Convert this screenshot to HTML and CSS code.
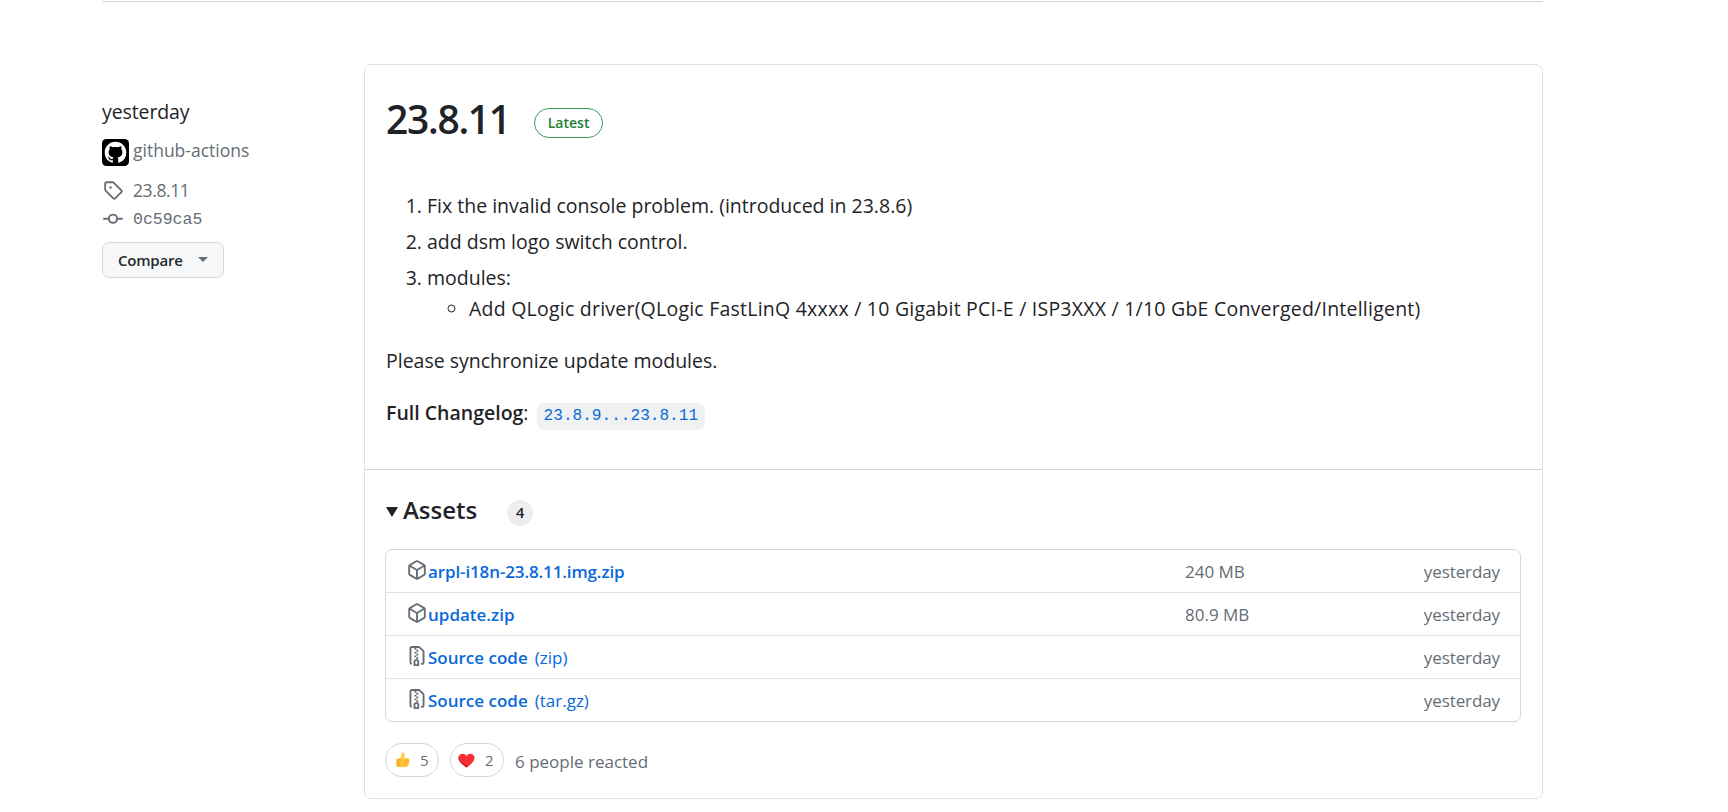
FILE: index.html
```html
<!DOCTYPE html>
<html lang="en">
<head>
  <meta charset="UTF-8" />
  <meta name="viewport" content="width=device-width, initial-scale=1.0" />
  <title>Release 23.8.11</title>
  <link rel="stylesheet" href="styles.css">
</head>
<body>

  <!-- Shared icons -->
  <svg class="sprite" xmlns="http://www.w3.org/2000/svg">
    <symbol id="icon-package" viewBox="0 0 16 16">
      <path d="m8.878.392 5.25 3.045c.54.314.872.89.872 1.514v6.098a1.75 1.75 0 0 1-.872 1.514l-5.25 3.045a1.75 1.75 0 0 1-1.756 0l-5.25-3.045A1.75 1.75 0 0 1 1 11.049V4.951c0-.624.332-1.201.872-1.514L7.122.392a1.75 1.75 0 0 1 1.756 0ZM7.875 1.69l-4.63 2.685L8 7.133l4.755-2.758-4.63-2.685a.248.248 0 0 0-.25 0ZM2.5 5.677v5.372c0 .09.047.171.125.216l4.625 2.683V8.432Zm6.25 8.271 4.625-2.683a.25.25 0 0 0 .125-.216V5.677L8.75 8.432Z"/>
    </symbol>
    <symbol id="icon-zip" viewBox="0 0 16 16">
      <path d="M3.5 1.75v11.5c0 .09.048.173.126.217a.75.75 0 0 1-.752 1.298A1.748 1.748 0 0 1 2 13.25V1.75C2 .784 2.784 0 3.75 0h5.586c.464 0 .909.185 1.237.513l2.914 2.914c.329.328.513.773.513 1.237v8.586A1.75 1.75 0 0 1 12.25 15h-.5a.75.75 0 0 1 0-1.5h.5a.25.25 0 0 0 .25-.25V4.664a.25.25 0 0 0-.073-.177L9.513 1.573a.25.25 0 0 0-.177-.073H3.75a.25.25 0 0 0-.25.25Z"/>
      <path fill-rule="evenodd" d="M7 10.500h1c1 0 1.750.8 1.750 1.750v3.250a.5.5 0 0 1-.5.5h-3.500a.5.5 0 0 1-.5-.5v-3.250c0-.95.75-1.750 1.750-1.750Zm-.25 1.750v2.250h1.500v-2.250a.25.25 0 0 0-.25-.25h-1a.25.25 0 0 0-.25.25Z"/>
      <path d="M6 1.500h1.500V3H6zM7.500 3H9v1.500H7.500zM6 4.500h1.500V6H6zM7.500 6H9v1.500H7.500zM6 7.500h1.500V9H6zM7.500 9H9v1.500H7.500z"/>
    </symbol>
  </svg>

  <hr class="divider">

  <main class="release">
    <aside class="meta">
      <div class="date">yesterday</div>
      <div class="author">
        <svg class="avatar" viewBox="0 0 27 27">
          <rect width="27" height="27" rx="4.5" fill="#000"/>
          <path fill="#fff" transform="translate(2.7 2.7) scale(1.35)" d="M8 0c4.42 0 8 3.58 8 8a8.013 8.013 0 0 1-5.45 7.59c-.4.08-.55-.17-.55-.38 0-.27.01-1.13.01-2.2 0-.75-.25-1.23-.54-1.48 1.78-.2 3.65-.88 3.65-3.95 0-.88-.31-1.59-.82-2.15.08-.2.36-1.02-.08-2.12 0 0-.67-.22-2.2.82-.64-.18-1.32-.27-2-.27-.68 0-1.36.09-2 .27-1.53-1.03-2.2-.82-2.2-.82-.44 1.1-.16 1.92-.08 2.12-.51.56-.82 1.28-.82 2.15 0 3.06 1.86 3.75 3.64 3.95-.23.2-.44.55-.51 1.07-.46.21-1.61.55-2.33-.66-.15-.24-.6-.83-1.23-.82-.67.01-.27.38.01.53.34.19.73.9.82 1.13.16.45.68 1.31 2.69.94 0 .67.01 1.3.01 1.49 0 .21-.15.45-.55.38A7.995 7.995 0 0 1 0 8c0-4.42 3.58-8 8-8Z"/>
        </svg>
        <span>github-actions</span>
      </div>
      <div class="ref tag">
        <svg class="icon" viewBox="0 0 16 16"><path d="M1 7.775V2.75C1 1.784 1.784 1 2.75 1h5.025c.464 0 .91.184 1.238.513l6.25 6.25a1.75 1.75 0 0 1 0 2.474l-5.026 5.026a1.75 1.75 0 0 1-2.474 0l-6.25-6.25A1.752 1.752 0 0 1 1 7.775Zm1.5 0c0 .066.026.13.073.177l6.25 6.25a.25.25 0 0 0 .354 0l5.025-5.025a.25.25 0 0 0 0-.354l-6.25-6.25a.25.25 0 0 0-.177-.073H2.75a.25.25 0 0 0-.25.25ZM6 5a1 1 0 1 1 0 2 1 1 0 0 1 0-2Z"/></svg>
        <span>23.8.11</span>
      </div>
      <div class="ref commit">
        <svg class="icon" viewBox="0 0 16 16"><path d="M11.93 8.5a4.002 4.002 0 0 1-7.86 0H.75a.75.75 0 0 1 0-1.5h3.32a4.002 4.002 0 0 1 7.86 0h3.32a.75.75 0 0 1 0 1.5Zm-1.43-.75a2.5 2.5 0 1 0-5 0 2.5 2.5 0 0 0 5 0Z"/></svg>
        <code>0c59ca5</code>
      </div>
      <button class="compare">Compare <span class="caret"></span></button>
    </aside>

    <section class="card">
      <div class="card-body">
        <header>
          <h1>23.8.11</h1>
          <span class="latest">Latest</span>
        </header>

        <ol>
          <li>Fix the invalid console problem. (introduced in 23.8.6)</li>
          <li>add dsm logo switch control.</li>
          <li>modules:
            <ul>
              <li>Add QLogic driver(QLogic FastLinQ 4xxxx / 10 Gigabit PCI-E / ISP3XXX / 1/10 GbE Converged/Intelligent)</li>
            </ul>
          </li>
        </ol>
        <p>Please synchronize update modules.</p>
        <p class="changelog"><strong>Full Changelog</strong>: <a href="#"><code>23.8.9...23.8.11</code></a></p>
      </div>

      <div class="card-assets">
        <h2><span class="triangle"></span>Assets <span class="counter">4</span></h2>

        <div class="assets">
          <div class="asset">
            <a href="#"><svg class="icon"><use href="#icon-package"/></svg><b class="tight">arpl-i18n-23.8.11.img.zip</b></a>
            <span class="size">240 MB</span>
            <span class="when">yesterday</span>
          </div>
          <div class="asset">
            <a href="#"><svg class="icon"><use href="#icon-package"/></svg><b>update.zip</b></a>
            <span class="size">80.9 MB</span>
            <span class="when">yesterday</span>
          </div>
          <div class="asset">
            <a href="#"><svg class="icon"><use href="#icon-zip"/></svg><b>Source code</b> <span class="ext">(zip)</span></a>
            <span class="when">yesterday</span>
          </div>
          <div class="asset">
            <a href="#"><svg class="icon"><use href="#icon-zip"/></svg><b>Source code</b> <span class="ext">(tar.gz)</span></a>
            <span class="when">yesterday</span>
          </div>
        </div>

        <div class="reactions">
          <button class="reaction">
            <svg width="14" height="16" viewBox="0 0 14 16">
              <path fill="#ffc83d" d="M6.500.5C7.900.3 8.600 1.200 8.500 2.700L8.300 6h3.500c1.300 0 1.800 1.100 1.300 1.900.6.700.5 1.700-.1 2.200.4.800.2 1.700-.5 2.100.2 1.200-.3 2.300-1.700 2.600-2.500.6-6 .6-8.300 0L2 7.500C4.500 6.500 5.500 4.500 5.500 2.500 5.500 1.300 5.700.7 6.500.5Z"/>
              <path fill="#fbb02e" d="M1.600 6.500H3.800c.6 0 .9.4.9.9v6.700c0 .5-.3.900-.9.900H2C.8 14.900.3 14 .3 12.800v-4C.3 7.500.7 6.500 1.600 6.500Z"/>
              <path fill="none" stroke="#f0a020" stroke-width=".7" d="M7.500 8.200h5.500M8 10.300h5M8 12.400h4.500"/>
            </svg>
            5
          </button>
          <button class="reaction heart">
            <svg width="17" height="15" viewBox="0 0 17 15">
              <path fill="#f92f35" d="M8.500 14.500C4.200 11.500.5 8.400.5 4.800.5 2.400 2.300.7 4.500.7c1.700 0 3.200.9 4 2.300.8-1.400 2.300-2.300 4-2.300 2.200 0 4 1.700 4 4.100 0 3.600-3.700 6.700-8 9.700Z"/>
              <path fill="#d9202c" d="M8.500 14.500C4.200 11.500.5 8.400.5 4.800c0-.8.200-1.500.5-2 .2 4 3.500 7.500 9.500 10.200Z"/>
            </svg>
            2
          </button>
          <span class="people">6 people reacted</span>
        </div>
      </div>
    </section>
  </main>

</body>
</html>
```
FILE: styles.css
```css
* {
  box-sizing: border-box;
}

body {
  margin: 0;
  padding: 1px 185px 0 102px;
  font-family: "Open Sans", "Noto Sans", sans-serif;
  font-size: 19.5px;
  line-height: 30px;
  color: #1f2328;
  background-color: #fff;
}

code {
  font-family: "Liberation Mono", monospace;
}

a {
  color: #0969da;
  text-decoration: none;
}

b,
strong {
  font-weight: 600;
}

button {
  font-family: inherit;
  background-color: #fff;
  cursor: pointer;
}

.sprite {
  display: none;
}

.divider {
  height: 1px;
  margin: 0 0 62px;
  border: 0;
  background-color: #d0d7de;
}

.icon {
  width: 20px;
  height: 20px;
  fill: #656d76;
  flex-shrink: 0;
}

.release {
  display: flex;
}

/* Left column */

.meta {
  width: 262px;
  flex-shrink: 0;
  padding-top: 33px;
  color: #656d76;
  font-size: 17.5px;
}

.date {
  font-size: 19.5px;
  letter-spacing: -0.1px;
  color: #1f2328;
}

.author {
  display: flex;
  gap: 4px;
  margin-top: 12px;
  line-height: 22px;
}

.avatar {
  width: 27px;
  height: 27px;
}

.ref {
  display: flex;
  gap: 10px;
  height: 20px;
  padding-left: 1px;
  line-height: 20px;
}

.tag {
  margin-top: 14px;
}

.tag span {
  letter-spacing: -0.4px;
}

.commit {
  margin-top: 9px;
}

.commit code {
  font-size: 16.5px;
  line-height: 22px;
}

.compare {
  display: flex;
  align-items: center;
  gap: 15px;
  height: 36px;
  margin-top: 13px;
  padding: 0 15px 1px;
  border: 1px solid #d5d8da;
  border-radius: 7px;
  background-color: #f6f8fa;
  color: #24292f;
  font-size: 15px;
  font-weight: 600;
  letter-spacing: -0.2px;
}

.caret {
  border: 5px solid transparent;
  border-top-color: #656d76;
  border-bottom: 0;
}

/* Release card */

.card {
  flex: 1;
  height: 735px;
  border: 1px solid #dde2e5;
  border-radius: 7px;
}

.card-body {
  height: 405px;
  padding: 28px 21px 0;
  border-bottom: 1px solid #ccd3d9;
}

.card header {
  display: flex;
  align-items: flex-start;
}

h1 {
  margin: 0;
  font-size: 39px;
  font-weight: 600;
  line-height: 51px;
  letter-spacing: -1.3px;
}

.latest {
  margin: 15px 0 0 24px;
  padding: 0 13px;
  border: 1px solid #3f9a57;
  border-radius: 15px;
  color: #1a7f37;
  font-size: 14px;
  font-weight: 600;
  line-height: 28px;
}

ol {
  margin: 47px 0 0;
  padding-left: 41px;
}

ol > li + li {
  margin-top: 6px;
}

ul {
  margin: 1px 0 0;
  padding-left: 42px;
}

ul li {
  letter-spacing: 0.23px;
}

p {
  margin: 22px 0 0;
}

.changelog code {
  margin-left: 3px;
  padding: 4px 7px 5px;
  border-radius: 7px;
  background-color: #eff1f3;
  font-size: 16.1px;
}

/* Assets */

.card-assets {
  padding: 24px 21px 0 20px;
}

h2 {
  display: flex;
  align-items: center;
  margin: 0;
  font-size: 24px;
  font-weight: 600;
  line-height: 32px;
}

.triangle {
  margin: 4px 5px 0 1px;
  border: 6px solid transparent;
  border-top: 10px solid #1f2328;
  border-bottom: 0;
}

.counter {
  width: 26px;
  height: 26px;
  margin: 5px 0 0 30px;
  border-radius: 50%;
  background-color: #eceef0;
  font-size: 14.5px;
  line-height: 26px;
  text-align: center;
}

.assets {
  margin-top: 23px;
  border: 1px solid #d0d7de;
  border-radius: 7px;
  font-size: 17px;
}

.asset {
  display: flex;
  align-items: center;
  height: 43px;
  padding: 2px 20px 0 21px;
}

.asset:first-child {
  height: 42px;
}

.asset + .asset {
  border-top: 1px solid #dfe3e7;
}

.asset a {
  display: flex;
  width: 778px;
}

.asset .icon {
  margin: 3px 1px 0 0;
}

.tight {
  letter-spacing: -0.12px;
}

.ext {
  margin-left: 7px;
}

.size,
.when {
  color: #656d76;
}

.when {
  margin-left: auto;
  letter-spacing: -0.1px;
}

.reactions {
  display: flex;
  align-items: center;
  margin-top: 21px;
  color: #656d76;
  font-size: 17px;
}

.reaction {
  display: flex;
  align-items: center;
  gap: 10px;
  width: 54px;
  height: 34px;
  margin-right: 11px;
  padding: 0 0 0 10px;
  border: 1px solid #d0d7de;
  border-radius: 17px;
  color: #656d76;
  font-size: 15px;
}

.heart {
  padding-left: 7px;
}

.people {
  padding-top: 4px;
}
```
